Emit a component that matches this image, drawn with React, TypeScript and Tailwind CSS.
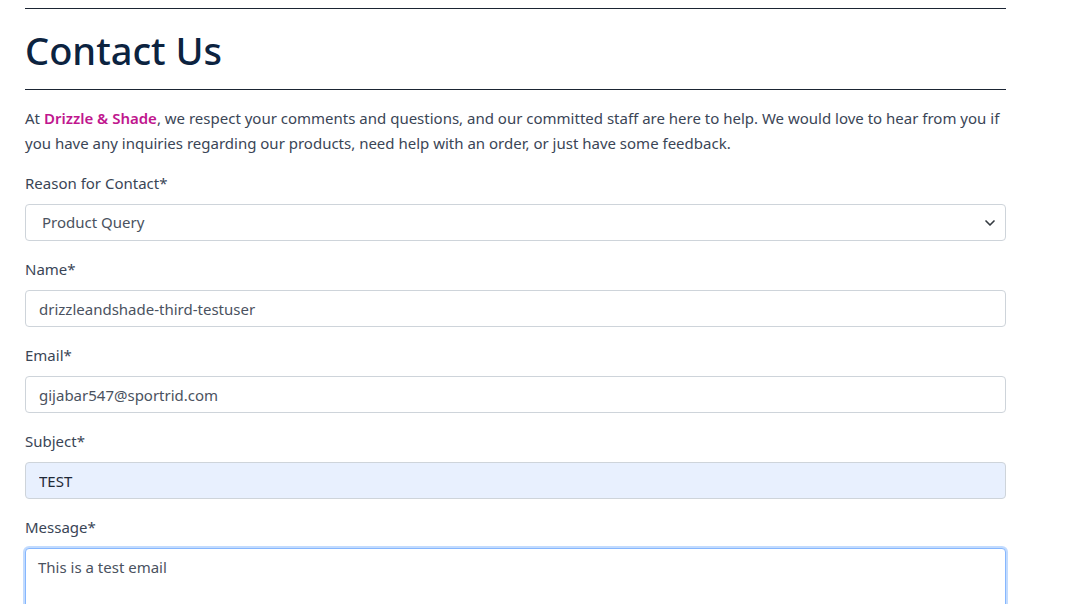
import React from 'react';
import { ChevronDown } from 'lucide-react';

const Field: React.FC<{ label: string; children: React.ReactNode }> = ({ label, children }) => (
  <div className="flex flex-col">
    <label className="text-[15px] leading-[22px] text-[#3a4556] mb-[10px]">{label}</label>
    {children}
  </div>
);

const inputBase =
  'h-[37px] w-full rounded-[4px] border border-[#ced4da] px-[13px] text-[15px] outline-none';

export default function App() {
  const [reason, setReason] = React.useState('Product Query');
  const [name, setName] = React.useState('drizzleandshade-third-testuser');
  const [email, setEmail] = React.useState('gijabar547@sportrid.com');
  const [subject, setSubject] = React.useState('TEST');
  const [message, setMessage] = React.useState('This is a test email');

  return (
    <div className="min-h-screen bg-white font-['Noto_Sans',sans-serif]">
      <div className="ml-[25px] w-[981px] pt-[8px]">
        <div className="border-t border-[#1b2533]" />
        <h1 className="mt-[18px] text-[38px] leading-[46px] font-medium text-[#0c2340]">Contact Us</h1>
        <div className="mt-[16px] border-t border-[#1b2533]" />

        <p className="mt-[16px] text-[15px] leading-[25px] text-[#3a4556]">
          At <span className="font-semibold text-[#c0168e]">Drizzle &amp; Shade</span>, we respect your comments and
          questions, and our committed staff are here to help. We would love to hear from you if you have any
          inquiries regarding our products, need help with an order, or just have some feedback.
        </p>

        <div className="mt-[16px] flex flex-col gap-[17px]">
          <Field label="Reason for Contact*">
            <div className="relative">
              <select
                value={reason}
                onChange={(e) => setReason(e.target.value)}
                className={inputBase + ' appearance-none bg-white pl-[16px] text-[#4a5260]'}
              >
                <option>Product Query</option>
                <option>Order Help</option>
                <option>Feedback</option>
              </select>
              <ChevronDown
                className="pointer-events-none absolute right-[8px] top-1/2 h-[16px] w-[16px] -translate-y-1/2 text-[#343a40]"
                strokeWidth={2.5}
              />
            </div>
          </Field>

          <Field label="Name*">
            <input value={name} onChange={(e) => setName(e.target.value)} className={inputBase + ' bg-white text-[#4a5260]'} />
          </Field>

          <Field label="Email*">
            <input value={email} onChange={(e) => setEmail(e.target.value)} className={inputBase + ' bg-white text-[#4a5260]'} />
          </Field>

          <Field label="Subject*">
            <input
              value={subject}
              onChange={(e) => setSubject(e.target.value)}
              className={inputBase + ' bg-[#e8f0fe] text-[#1f2937]'}
            />
          </Field>

          <Field label="Message*">
            <textarea
              value={message}
              onChange={(e) => setMessage(e.target.value)}
              className="h-[120px] w-full resize-none rounded-[4px] border border-[#86b7fe] bg-white px-[12px] py-[7px] text-[15px] text-[#4a5260] shadow-[0_0_0_2px_rgba(13,110,253,0.25)] outline-none"
            />
          </Field>
        </div>
      </div>
    </div>
  );
}
